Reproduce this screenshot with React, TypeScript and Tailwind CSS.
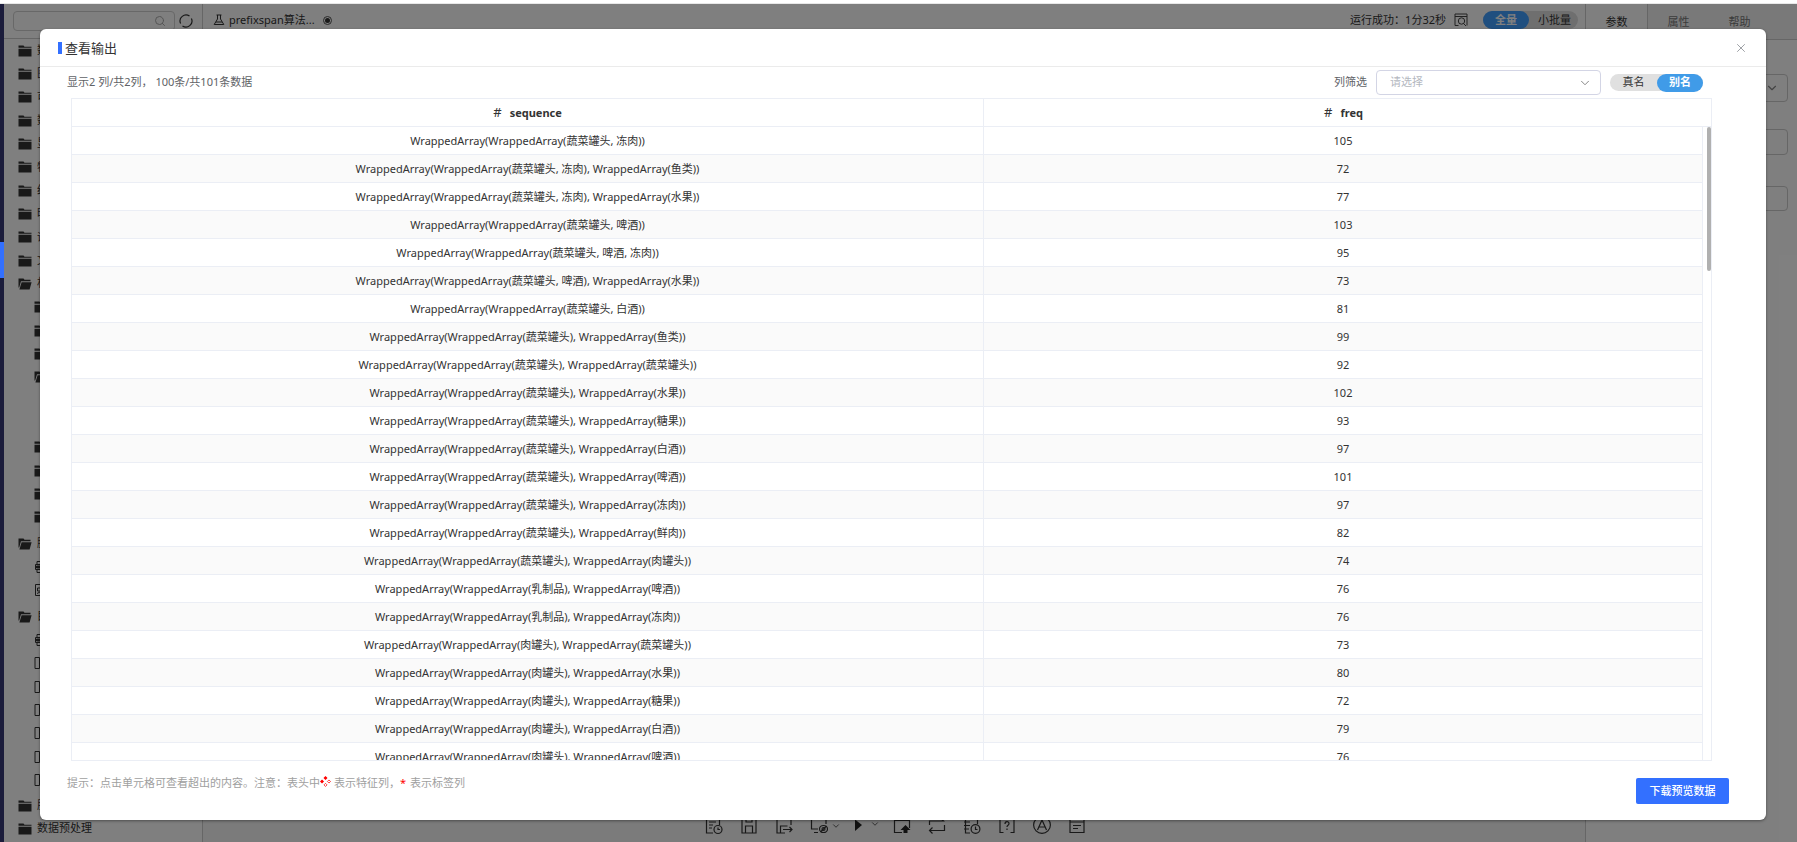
import { ChevronDown, Search, X } from "lucide-react";
import type { ReactNode } from "react";

type Row = [string, number];

const V = "蔬菜罐头";
const one = (a: string) => `WrappedArray(WrappedArray(${a}))`;
const two = (a: string, b: string) => `WrappedArray(WrappedArray(${a}), WrappedArray(${b}))`;

const rows: Row[] = [
  [one(`${V}, 冻肉`), 105],
  [two(`${V}, 冻肉`, "鱼类"), 72],
  [two(`${V}, 冻肉`, "水果"), 77],
  [one(`${V}, 啤酒`), 103],
  [one(`${V}, 啤酒, 冻肉`), 95],
  [two(`${V}, 啤酒`, "水果"), 73],
  [one(`${V}, 白酒`), 81],
  [two(V, "鱼类"), 99],
  [two(V, V), 92],
  [two(V, "水果"), 102],
  [two(V, "糖果"), 93],
  [two(V, "白酒"), 97],
  [two(V, "啤酒"), 101],
  [two(V, "冻肉"), 97],
  [two(V, "鲜肉"), 82],
  [two(V, "肉罐头"), 74],
  [two("乳制品", "啤酒"), 76],
  [two("乳制品", "冻肉"), 76],
  [two("肉罐头", V), 73],
  [two("肉罐头", "水果"), 80],
  [two("肉罐头", "糖果"), 72],
  [two("肉罐头", "白酒"), 79],
  [two("肉罐头", "啤酒"), 76],
];

type Kind = "folder" | "open" | "model" | "image" | "file" | "blank";
type Node = { kind: Kind; label: string; child?: boolean };

const tree: Node[] = [
  { kind: "folder", label: "数据源" },
  { kind: "folder", label: "图表" },
  { kind: "folder", label: "可视化" },
  { kind: "folder", label: "数据集" },
  { kind: "folder", label: "显示" },
  { kind: "folder", label: "特征工程" },
  { kind: "folder", label: "统计分析" },
  { kind: "folder", label: "时间序列" },
  { kind: "folder", label: "评估" },
  { kind: "folder", label: "文本分析" },
  { kind: "open", label: "机器学习" },
  { kind: "folder", label: "", child: true },
  { kind: "folder", label: "", child: true },
  { kind: "folder", label: "", child: true },
  { kind: "open", label: "", child: true },
  { kind: "blank", label: "" },
  { kind: "blank", label: "" },
  { kind: "folder", label: "", child: true },
  { kind: "folder", label: "", child: true },
  { kind: "folder", label: "", child: true },
  { kind: "folder", label: "", child: true },
];

const models: Node[] = [
  { kind: "open", label: "脚本" },
  { kind: "model", label: "", child: true },
  { kind: "image", label: "", child: true },
];

const files: Node[] = [
  { kind: "open", label: "目录" },
  { kind: "model", label: "", child: true },
  { kind: "file", label: "", child: true },
  { kind: "file", label: "", child: true },
  { kind: "file", label: "", child: true },
  { kind: "file", label: "", child: true },
  { kind: "file", label: "", child: true },
  { kind: "file", label: "", child: true },
];

const rest: Node[] = [
  { kind: "folder", label: "服务" },
  { kind: "folder", label: "数据预处理" },
];

function NodeIcon({ kind }: { kind: Kind }) {
  if (kind === "folder")
    return (
      <svg viewBox="0 0 14 12" className="h-3 w-[14px] shrink-0" fill="#333">
        <path d="M.5.5h5l1 1.300h7v1H.5zM.5 3.800h13v7.700H.5z" />
      </svg>
    );
  if (kind === "open")
    return (
      <svg viewBox="0 0 14 12" className="h-3 w-[14px] shrink-0" fill="#333">
        <path d="M.5.5h5l1 1.300h6v1.400H3L1.200 9.500H.5zM3.600 4.200h10l-2 7.300H1.400z" />
      </svg>
    );
  if (kind === "model")
    return (
      <svg viewBox="0 0 14 14" className="size-[14px] shrink-0" fill="none" stroke="#333">
        <path d="M3 4.500V1.500h9v3M3 10v2.500h9V10M1.500 4.500h12v5h-12z" />
        <path d="M2.500 6h4v2h-4z" fill="#333" />
      </svg>
    );
  if (kind === "image")
    return (
      <svg viewBox="0 0 14 14" className="size-[14px] shrink-0" fill="none" stroke="#333">
        <path d="M1.500 1.500h12v11h-12zM3.500 5h3v3h-3zM3 10.500l4-2 4 2" />
      </svg>
    );
  return (
    <svg viewBox="0 0 14 12" className="h-3 w-[14px] shrink-0" fill="none" stroke="#333">
      <path d="M1 .5h4.500v11H1z" />
    </svg>
  );
}

function TreeGroup({ nodes }: { nodes: Node[] }) {
  return (
    <ul className="flex flex-col">
      {nodes.map((n, i) => (
        <li
          key={i}
          className={`flex h-[23px] items-center gap-[5px] whitespace-nowrap nth-[3n]:h-6 ${n.child ? "pl-[30px]" : "pl-[14px]"}`}
        >
          {n.kind !== "blank" && <NodeIcon kind={n.kind} />}
          {n.label}
        </li>
      ))}
    </ul>
  );
}

function Tool({ label, children }: { label: string; children: ReactNode }) {
  return (
    <button type="button" aria-label={label} className="flex items-center">
      <svg viewBox="0 0 18 18" className="size-[18px]" fill="none" stroke="#333" strokeWidth="1.2">
        {children}
      </svg>
    </button>
  );
}

function Toolbar() {
  return (
    <div className="flex items-center gap-[17px] pl-[502px]">
      <Tool label="日志">
        <path d="M8 16H1.500V1.500h13V8M4 5h7M4 8h4M4 11h3" />
        <circle cx="13" cy="12.500" r="4" />
        <path d="M13 10.500v2h2" />
      </Tool>
      <Tool label="保存">
        <path d="M2 2h14v14H2zM5.500 16V9h7v7M6 2v3h6V2" />
      </Tool>
      <Tool label="另存为">
        <path d="M16 8V2H2v14h8M5.500 16V9h7M8 12.500h9M14.500 10l2.500 2.500-2.500 2.500" />
      </Tool>
      <div className="flex items-center gap-[3px]">
        <Tool label="监控">
          <path d="M16 7V2H1.500v10H8M4 15.500h4" />
          <ellipse cx="13.500" cy="12" rx="4" ry="3.500" />
          <circle cx="13.500" cy="12" r="1.500" />
          <path d="M10.500 15l6-6" />
        </Tool>
        <ChevronDown className="-mr-1 size-[10px]" color="#444" />
      </div>
      <div className="flex items-center gap-2">
        <button type="button" aria-label="运行">
          <svg viewBox="0 0 8 18" className="h-[18px] w-2" fill="#222">
            <path d="M1 2.500v11.500l7-6z" />
          </svg>
        </button>
        <ChevronDown className="-mt-1 -mr-1 size-[10px]" color="#444" />
      </div>
      <Tool label="上传">
        <path d="M9 15.500H1.500v-12h15V11" />
        <path d="M12.500 8l-5 5h3V16h4v-3h3z" fill="#222" stroke="none" />
      </Tool>
      <Tool label="循环">
        <path d="M1.500 8V4h14l-3-3M16.500 8v5.500h-15M4.500 10.500l-3 3 3 3" />
      </Tool>
      <Tool label="历史">
        <path d="M7 16H2.500V1.500h12V7M1 5h6M1 8.500h6M1 12h5" />
        <circle cx="12.500" cy="12" r="4.400" />
        <path d="M12.500 9.500v3h2" />
      </Tool>
      <Tool label="帮助">
        <path d="M5.500 2H2v13.500h3.500M12.500 2H16v13.500h-3.500M7 7c0-3 4-3 4-.5 0 2-2 1.500-2 3.500M9 11.500v1.500" />
      </Tool>
      <Tool label="自动">
        <circle cx="9" cy="8" r="8.400" />
        <path d="M4.500 13L9 3l4.500 10M6 10h6" />
      </Tool>
      <Tool label="列表">
        <path d="M2 2h14v13.500H2zM2 5h14M5 8.500h8M5 11.500h5" />
      </Tool>
    </div>
  );
}

function Workbench() {
  return (
    <div className="flex h-full bg-white text-[11px] text-[#333]" aria-hidden="true">
      <aside className="flex w-[199px] shrink-0 flex-col border-r border-[#ccc]">
        <div className="flex h-[35px] shrink-0 items-start gap-1 border-b border-[#ccc] pt-[7px] pl-[9px]">
          <div className="flex h-[20px] w-[162px] items-center justify-end rounded-sm border border-[#d0d0d0] pr-2">
            <Search className="size-3" color="#aaa" />
          </div>
          <svg viewBox="0 0 14 14" className="mt-[3px] size-[14px]" fill="none" stroke="#333" strokeWidth="1.2">
            <path d="M1.600 9.500A6 6 0 0 1 10.500 2.100M12.400 4.500A6 6 0 0 1 3.500 11.900M1 5.500l.8-1.500M13 8.500l-.8 1.500" />
          </svg>
        </div>
        <TreeGroup nodes={tree} />
        <div className="pt-[3px]">
          <TreeGroup nodes={models} />
        </div>
        <div className="pt-[3px]">
          <TreeGroup nodes={files} />
        </div>
        <div className="pt-[3px]">
          <TreeGroup nodes={rest} />
        </div>
      </aside>
      <main className="flex min-w-0 flex-1 flex-col justify-between bg-[#f6f6f6]">
        <div className="flex h-8 items-center bg-white pl-[10px]">
          <svg viewBox="0 0 12 12" className="size-3" fill="none" stroke="#333">
            <path d="M3.500 1h5M4.500 1v4L1.200 10.500h9.600L7.500 5V1M3 8h6" />
          </svg>
          <span className="ml-1">prefixspan算法...</span>
          <span className="ml-2 flex size-[9px] items-center justify-center rounded-full border border-[#555]">
            <span className="size-[5px] rounded-full bg-[#333]" />
          </span>
          <span className="ml-auto">运行成功：1分32秒</span>
          <svg viewBox="0 0 14 14" className="mr-[15px] ml-2 size-[14px]" fill="none" stroke="#444">
            <path d="M4.500 12.500H1V1h12v11.500M1 3.500h12" />
            <circle cx="7.500" cy="8" r="3.200" />
            <path d="M9.500 10.500l2.500 2.500" />
          </svg>
          <div className="mr-[7px] flex h-[18px] items-center rounded-full bg-[#dfdfdf] pr-[7px]">
            <span className="mr-[9px] flex h-[18px] w-[46px] items-center justify-center rounded-full bg-[#409eff] font-bold text-white">
              全量
            </span>
            小批量
          </div>
        </div>
        <div className="h-[25px]">
          <Toolbar />
        </div>
      </main>
      <aside className="w-[212px] shrink-0 border-l border-[#ccc]">
        <div className="flex h-9 border-b border-[#ccc] bg-[#f2f2f2] leading-9">
          <span className="w-[62px] border-r border-[#ccc] bg-white text-center">参数</span>
          <span className="w-[61px] text-center text-[#777]">属性</span>
          <span className="w-[61px] text-center text-[#777]">帮助</span>
        </div>
        <div className="flex flex-col pt-[34px] pr-[9px] pl-4">
          <div className="mb-[27px] flex h-7 items-center justify-end rounded-sm border border-[#ccc] pr-2">
            <ChevronDown className="size-[14px]" color="#888" />
          </div>
          <div className="mb-[31px] h-[26px] rounded-sm border border-[#ccc]" />
          <div className="h-[25px] rounded-sm border border-[#ccc]" />
        </div>
      </aside>
    </div>
  );
}

function ResultTable() {
  return (
    <div className="mr-[54px] ml-[31px] flex min-h-0 flex-1 flex-col border border-[#ebeef5]">
      <div className="relative min-h-0 flex-1 overflow-hidden">
        <table className="w-full table-fixed border-separate border-spacing-0 text-center text-[11px] leading-4 text-[#333]">
          <colgroup>
            <col className="w-[912px]" />
            <col />
            <col className="w-2" />
          </colgroup>
          <thead>
            <tr className="h-7">
              <th className="border-r border-b border-[#ebeef5] p-0">
                <span className="mr-2 text-[13px] font-normal">#</span>sequence
              </th>
              <th className="border-b border-[#ebeef5] p-0">
                <span className="mr-2 text-[13px] font-normal">#</span>freq
              </th>
              <td className="border-b border-[#ebeef5] p-0" />
            </tr>
          </thead>
          <tbody>
            {rows.map(([seq, freq], i) => (
              <tr key={i} className="h-7">
                <td className={`border-r border-b border-[#ebeef5] p-0 ${i % 2 ? "bg-[#fafafa]" : ""}`}>{seq}</td>
                <td className={`border-r border-b border-[#ebeef5] p-0 ${i % 2 ? "bg-[#fafafa]" : ""}`}>{freq}</td>
                <td className="p-0" />
              </tr>
            ))}
          </tbody>
        </table>
        <div className="absolute top-7 right-0 h-36 w-1 rounded-full bg-[#b0b0b0]" />
      </div>
    </div>
  );
}

function OutputDialog() {
  return (
    <section
      role="dialog"
      aria-labelledby="dialog-title"
      className="flex h-full flex-col rounded-md bg-white text-[11px] text-[#606266] shadow-[0_1px_3px_rgba(0,0,0,0.4)]"
    >
      <header className="flex h-[38px] shrink-0 items-center justify-between border-b border-[#ebebeb] px-[18px]">
        <h2 id="dialog-title" className="flex items-center gap-[3px] text-[13px] leading-4 text-[#333]">
          <span className="h-3 w-1 bg-[#3370ff]" />
          查看输出
        </h2>
        <button type="button" aria-label="关闭" className="flex size-[14px] items-center justify-center">
          <X className="size-[14px]" color="#909399" strokeWidth={1.5} />
        </button>
      </header>
      <div className="flex h-[31px] shrink-0 items-center pr-[63px] pl-[27px]">
        <p>显示2 列/共2列， 100条/共101条数据</p>
        <label htmlFor="column-filter" className="mr-[9px] ml-auto">
          列筛选
        </label>
        <span className="mr-[9px] flex items-center">
          <select
            id="column-filter"
            defaultValue=""
            className="h-[25px] w-[225px] appearance-none rounded-sm border border-[#d3d5e5] bg-white pl-[13px] text-[11px] text-[#b4b8bf]"
          >
            <option value="">请选择</option>
          </select>
          <ChevronDown className="pointer-events-none -ml-[23px] mr-[9px] size-[14px]" color="#777" strokeWidth={1.5} />
        </span>
        <div className="flex h-[17px] items-center rounded-full bg-[#e0e0e0] text-[#333]">
          <button type="button" className="w-[47px]">
            真名
          </button>
          <button type="button" className="h-[18px] w-[46px] rounded-full bg-[#409be8] font-bold text-white">
            别名
          </button>
        </div>
      </div>
      <ResultTable />
      <footer className="flex h-[59px] shrink-0 items-start justify-between pr-[37px] pl-[27px]">
        <p className="flex items-center pt-[14px] text-[#a0a0a0]">
          提示：点击单元格可查看超出的内容。注意：表头中
          <svg viewBox="0 0 12 12" className="mr-[3px] -mt-1 size-[11px]" fill="#f00">
            <path d="M6 0l2.200 2.200L6 4.400 3.800 2.200zM2.200 3.800L4.400 6 2.200 8.200 0 6z" />
            <path
              d="M9.800 4.300L11.500 6 9.800 7.700 8.100 6zM6 8l1.700 1.700L6 11.400 4.300 9.700z"
              fill="none"
              stroke="#f00"
              strokeWidth=".8"
            />
          </svg>
          表示特征列，
          <span className="mr-1 text-[#f00]">*</span>
          表示标签列
        </p>
        <button
          type="button"
          className="mt-[17px] h-[26px] w-[93px] rounded-xs bg-[#3370ff] text-[11px] font-medium text-white"
        >
          下载预览数据
        </button>
      </footer>
    </section>
  );
}

export default function App() {
  return (
    <div className="flex h-screen flex-col overflow-hidden bg-white font-['Noto_Sans','Noto_Sans_CJK_SC',sans-serif]">
      <div className="h-1 shrink-0 border-b border-[#e8e8e8] bg-white" />
      <div className="flex min-h-0 flex-1">
        <nav className="w-1 shrink-0 bg-[#1b1c3b] pt-[238px]">
          <div className="h-9 bg-[#3370ff]" />
        </nav>
        <div className="relative min-w-0 flex-1 overflow-hidden">
          <Workbench />
          <div className="absolute inset-0 bg-black/50 pt-[25px] pr-[31px] pb-[22px] pl-9">
            <OutputDialog />
          </div>
        </div>
      </div>
    </div>
  );
}
